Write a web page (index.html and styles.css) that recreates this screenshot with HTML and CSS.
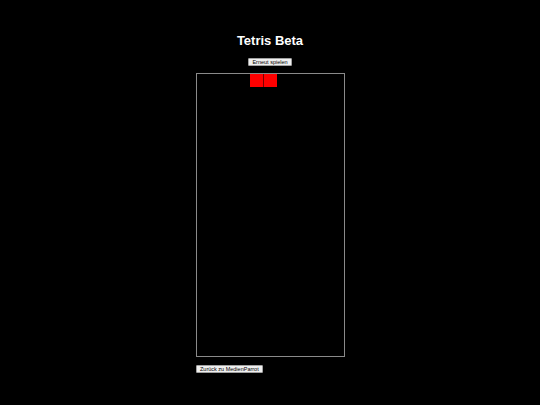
FILE: index.html
```html
<!DOCTYPE html>
<html lang="de">
<head>
<meta charset="utf-8">
<title>Tetris Beta</title>
<link rel="stylesheet" href="styles.css">
</head>
<body>
<main class="page">
  <h1 class="title">Tetris Beta</h1>
  <button class="btn restart">Erneut spielen</button>
  <div class="game">
    <div class="board">
      <div class="piece-row">
        <div class="block"></div>
        <div class="block"></div>
      </div>
    </div>
    <button class="btn back">Zurück zu MedienParrot</button>
  </div>
</main>
</body>
</html>
```
FILE: styles.css
```css
html, body {
  margin: 0;
  padding: 0;
  background: #000;
  height: 100%;
}
body {
  font-family: "Liberation Sans", Arial, sans-serif;
  color: #fff;
}
.page {
  display: flex;
  flex-direction: column;
  align-items: center;
  padding-top: 33px;
}
.title {
  margin: 0;
  font-size: 13px;
  line-height: 15px;
  font-weight: bold;
  color: #fff;
}
.btn {
  font-family: "Liberation Sans", Arial, sans-serif;
  font-size: 5.5px;
  line-height: 6px;
  height: 8px;
  padding: 0 3.5px;
  margin: 0;
  color: #000;
  background: #efefef;
  border: 1px solid #a0a0a0;
  border-radius: 1px;
  box-sizing: border-box;
}
.restart {
  margin-top: 10px;
}
.game {
  margin-top: 7px;
  display: flex;
  flex-direction: column;
  align-items: flex-start;
}
.board {
  width: 149px;
  height: 284px;
  box-sizing: border-box;
  border: 1px solid #8a8a8a;
  display: flex;
  flex-direction: column;
}
.piece-row {
  display: flex;
  gap: 1px;
  padding-left: 53px;
}
.block {
  width: 13px;
  height: 13px;
  background: #ff0000;
}
.piece-row {
  background: transparent;
}
.block + .block {
  box-shadow: -1px 0 0 #700;
}
.back {
  margin-top: 8px;
}
```
